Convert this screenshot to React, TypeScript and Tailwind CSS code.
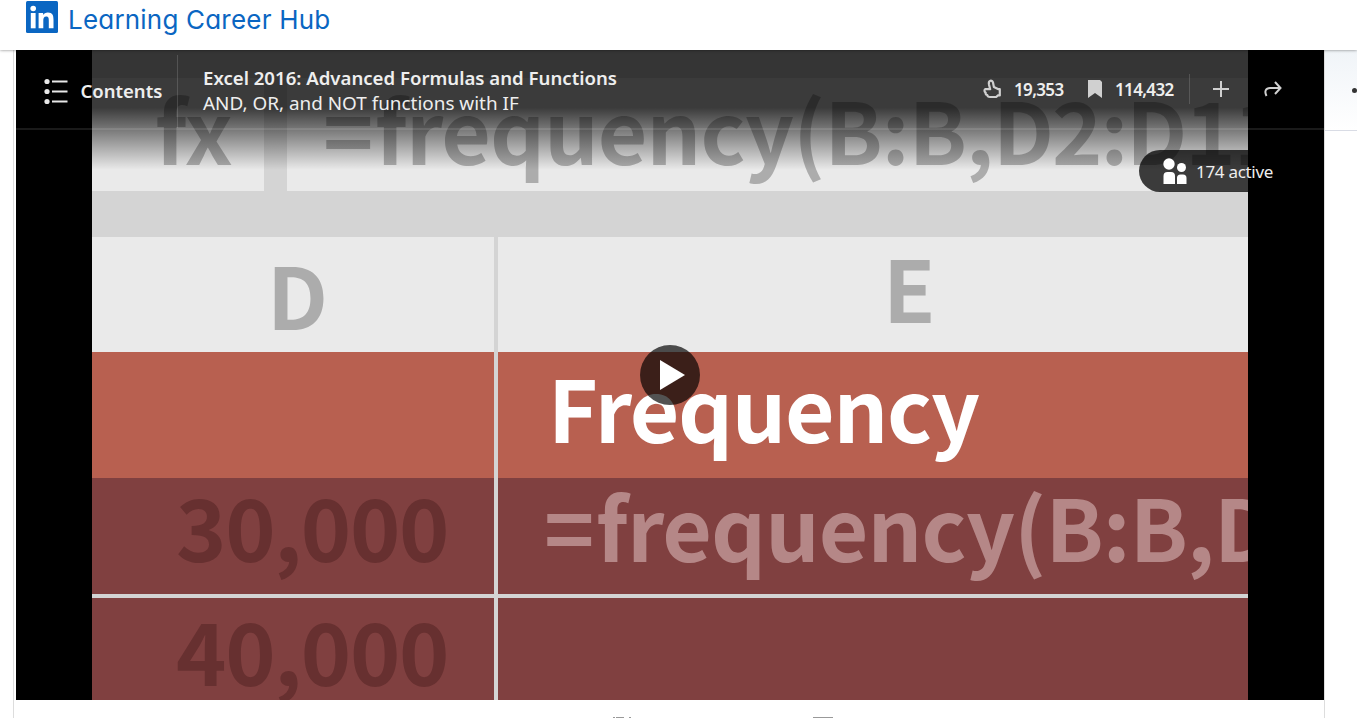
import React from "react";

const ui = "font-['Noto_Sans','Open_Sans',sans-serif]";
const glyph = "block whitespace-pre leading-[86px] text-[85.5px] tracking-[-1.3px]";
const formula = "block whitespace-pre leading-[86px] text-[85.5px] tracking-[-0.9px]";

function Logo() {
  return (
    <svg width="32" height="32" viewBox="0 0 32 32" className="mt-px shrink-0">
      <rect width="32" height="32" rx="1.5" fill="#0a66c2" />
      <g fill="#fff">
        <circle cx="7.2" cy="7.5" r="2.8" />
        <rect x="4.8" y="12" width="4.8" height="15.3" />
        <path d="M12.6 12h4.5v2.1c.9-1.5 2.5-2.5 4.8-2.5 4.700 0 5.600 3.100 5.600 7.200v8.500h-4.700v-7.500c0-1.900 0-4.200-2.500-4.200s-3 2-3 4.100v7.600h-4.700z" />
      </g>
    </svg>
  );
}

function VideoFrame() {
  return (
    <div className="flex h-[650px] w-[1156px] flex-col overflow-hidden bg-[#d4d4d4] pt-[28px] font-['Noto_Sans_CJK_SC',sans-serif] font-bold">
      <div className="flex h-[113px] shrink-0 gap-[23px] text-[#acacac]">
        <div className="w-[172px] shrink-0 bg-[#eaeaea] pl-[63px] pt-[7px]">
          <span className={glyph}>fx</span>
        </div>
        <div className="w-[961px] shrink-0 overflow-hidden bg-[#eaeaea] pl-[36px] pt-[7px]">
          <span className={formula}><span className="mr-[2.5px]">=</span>frequency(B:B,<span className="tracking-[-2px]">D2:D11</span>)</span>
        </div>
      </div>
      <div className="mt-[46px] flex h-[115px] shrink-0 gap-1 text-[#acacac]">
        <div className="w-[402px] bg-[#eaeaea] pl-[175px] pt-[13px]"><span className={glyph}>D</span></div>
        <div className="w-[750px] bg-[#eaeaea] pl-[385px] pt-[6px]"><span className={glyph}>E</span></div>
      </div>
      <div className="flex h-[126px] shrink-0 gap-1 text-white">
        <div className="w-[402px] bg-[#b86050]" />
        <div className="w-[750px] bg-[#b86050] pl-[50px] pt-[11px]"><span className={glyph}>Frequency</span></div>
      </div>
      <div className="flex h-[116px] shrink-0 gap-1">
        <div className="w-[402px] bg-[#804040] pl-[84px] pt-[4px] text-[#673030]"><span className={glyph}>30,000</span></div>
        <div className="w-[750px] overflow-hidden bg-[#804040] pl-[46px] pt-[4px] text-[#b58787]"><span className={formula}><span className="mr-[2.5px]">=</span>frequency(B:B,D2</span></div>
      </div>
      <div className="mt-1 flex h-[102px] shrink-0 gap-1">
        <div className="w-[402px] overflow-hidden bg-[#804040] pl-[84px] pt-[8px] text-[#673030]"><span className={glyph}>40,000</span></div>
        <div className="w-[750px] bg-[#804040]" />
      </div>
    </div>
  );
}

function PlayerBar() {
  return (
    <div className="relative flex h-[80px] items-start border-b-2 border-white/10 text-[#eeeeee]">
      <div className="flex w-[161px] shrink-0 items-center pl-[28px] pt-[28px]">
        <svg width="24" height="27" viewBox="0 0 24 27" fill="#e8e8e8" className="shrink-0">
          <circle cx="3" cy="3.500" r="2.600" /><circle cx="3" cy="13.500" r="2.600" /><circle cx="3" cy="23.500" r="2.600" />
          <rect x="8" y="2.500" width="15.500" height="2" /><rect x="8" y="12.500" width="15.500" height="2" /><rect x="8" y="22.500" width="15.500" height="2" />
        </svg>
        <span className="-mt-px ml-[12.5px] whitespace-nowrap text-[18.5px] font-semibold leading-6">Contents</span>
      </div>
      <div className="mt-[5px] h-[73px] w-px bg-white/15" />
      <div className="w-[780px] pl-[25px] pt-[15px]">
        <div className="text-[18.600px] font-semibold leading-[25px]">Excel 2016: Advanced Formulas and Functions</div>
        <div className="text-[18.900px] leading-[27px]">AND, OR, and NOT functions with IF</div>
      </div>
      <div className="mt-[24px] flex h-[30px] shrink-0 items-center text-[17px] font-semibold tracking-[-0.65px]">
        <svg className="ml-[24px]" width="21" height="20" viewBox="0 0 21 20" fill="none" stroke="#d0d0d0" strokeWidth="2.200" strokeLinejoin="round">
          <path d="M3.200 10.200h5L7 5.600C6 1.300 10.300.4 11 3.600l.9 4.300 4.600 2.300h1.300v6.200h-1.800L14.200 18H8c-1.600 0-2.600-.8-2.700-2-1.400-.2-2-1.300-1.600-2.300-1.500-.9-1.600-2.700-.5-3.500z" />
        </svg>
        <span className="ml-[11px] mt-[2px] w-[50px] whitespace-nowrap">19,353</span>
        <svg className="ml-[24px]" width="14" height="18" viewBox="0 0 14 18" fill="#d0d0d0"><path d="M0 0h12l2 2v16l-7-5-7 5z" /></svg>
        <span className="ml-[13px] mt-[2px] w-[59px] whitespace-nowrap">114,432</span>
        <div className="ml-[15px] h-[30px] w-px bg-white/15" />
        <svg className="ml-[23px]" width="16" height="16" viewBox="0 0 16 16" stroke="#d0d0d0" strokeWidth="2"><path d="M8 0v16M0 8h16" /></svg>
        <svg className="ml-[35px]" width="18" height="16" viewBox="0 0 18 16" fill="none" stroke="#d0d0d0" strokeWidth="2"><path d="M2.500 15C0 10 2 7 6 7h10M11 1l5.500 6-5.500 6" /></svg>
      </div>
    </div>
  );
}

export default function App() {
  return (
    <div className={"flex h-[718px] w-[1357px] flex-col overflow-hidden bg-white " + ui}>
      <header className="relative z-10 flex h-[50px] shrink-0 items-start bg-white pl-[26px] shadow-[0_0_3px_rgba(0,0,0,0.5)]">
        <Logo />
        <span className="ml-[10px] mt-[4px] whitespace-nowrap font-['Inter',sans-serif] text-[26px] leading-[32px] tracking-[0.2px] text-[#0a66c2] [font-feature-settings:'cv11']">Learning Career Hub</span>
      </header>
      <div className="flex h-[668px] shrink-0 pl-[13px]">
        <main className="w-[1312px] shrink-0 border-x border-[#dddddd] pl-[2px]">
          <div className="relative h-[650px] w-[1308px] bg-black">
            <div className="flex justify-center"><VideoFrame /></div>
            <div className="absolute inset-x-0 top-0 h-[120px] bg-linear-to-b from-black/75 from-[48%] to-transparent to-100%" />
            <div className="absolute inset-x-0 top-0"><PlayerBar /></div>
            <div className="absolute left-[1123px] top-[100px] flex h-[42px] w-[185px] items-center rounded-l-full bg-black/75 pl-[24px] text-[17px] text-[#eeeeee]">
              <svg width="24" height="26" viewBox="0 0 24 26" fill="#fff"><circle cx="6" cy="6" r="5.700" /><circle cx="18.500" cy="9.500" r="4.500" /><path d="M0.500 26v-8q0-4 4-4h3.500q4 0 4 4v8zM14 26v-6q0-3.500 3.500-3.500h2.500q3.500 0 3.500 3.500v6z" /></svg>
              <span className="ml-[9px] mt-px tracking-[-0.3px]">174 active</span>
            </div>
            <div className="absolute left-[624px] top-[295px] flex h-[60px] w-[60px] items-center justify-center rounded-full bg-black/68">
              <svg className="ml-[4px]" width="25" height="30" viewBox="0 0 25 30" fill="#fff"><path d="M0 0l25 15L0 30z" /></svg>
            </div>
          </div>
          <svg className="ml-[596px] mt-[17px]" width="221" height="1" fill="#999"><path d="M1 0h2v1H1zM4 0h8v1H4zM17 0h2v1h-2zM201 0h20v1h-20z" /></svg>
        </main>
        <aside className="flex h-[81px] flex-1 items-start justify-end border-b border-[#d9dce5] bg-linear-to-b from-[#f0f4f8] to-white pt-[38px]">
          <span className="h-[5px] w-[5px] rounded-full bg-[#333]" />
        </aside>
      </div>
    </div>
  );
}
